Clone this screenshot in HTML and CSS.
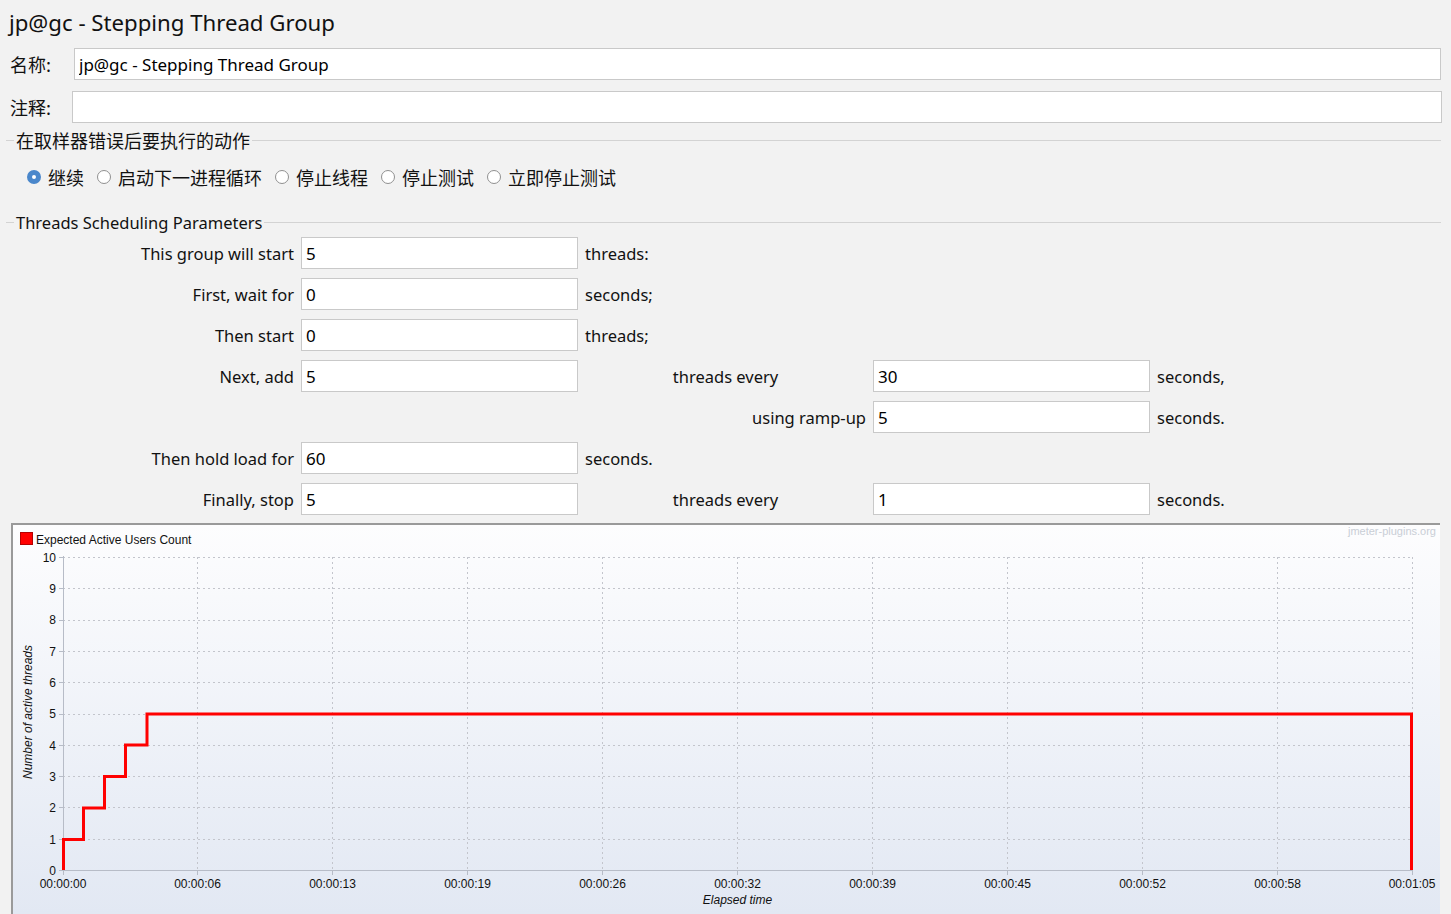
FILE: index.html
```html
<!DOCTYPE html>
<html>
<head>
<meta charset="utf-8">
<title>jp@gc - Stepping Thread Group</title>
<link rel="stylesheet" href="styles.css">
</head>
<body>
<div class="title">jp@gc - Stepping Thread Group</div>

<div class="field-row name-row">
  <span class="zh field-label name-label">名称:</span>
  <input class="text-input" type="text" value="jp@gc - Stepping Thread Group">
</div>
<div class="field-row comment-row">
  <span class="zh field-label comment-label">注释:</span>
  <input class="text-input" type="text" value="">
</div>

<div class="legend legend-first"><span class="zh">在取样器错误后要执行的动作</span></div>
<div class="radio-row zh">
  <span class="radio checked"></span><span class="radio-label">继续</span>
  <span class="radio"></span><span class="radio-label">启动下一进程循环</span>
  <span class="radio"></span><span class="radio-label">停止线程</span>
  <span class="radio"></span><span class="radio-label">停止测试</span>
  <span class="radio"></span><span class="radio-label">立即停止测试</span>
</div>

<div class="legend legend-second"><span>Threads Scheduling Parameters</span></div>

<div class="params">
  <span class="p-label">This group will start</span><input class="text-input" type="text" value="5"><span class="p-text">threads:</span><span></span><span></span>
  <span class="p-label">First, wait for</span><input class="text-input" type="text" value="0"><span class="p-text">seconds;</span><span></span><span></span>
  <span class="p-label">Then start</span><input class="text-input" type="text" value="0"><span class="p-text">threads;</span><span></span><span></span>
  <span class="p-label">Next, add</span><input class="text-input" type="text" value="5"><span class="p-text p-center">threads every</span><input class="text-input" type="text" value="30"><span class="p-text">seconds,</span>
  <span></span><span></span><span class="p-text p-right">using ramp-up</span><input class="text-input" type="text" value="5"><span class="p-text">seconds.</span>
  <span class="p-label">Then hold load for</span><input class="text-input" type="text" value="60"><span class="p-text">seconds.</span><span></span><span></span>
  <span class="p-label">Finally, stop</span><input class="text-input" type="text" value="5"><span class="p-text p-center">threads every</span><input class="text-input" type="text" value="1"><span class="p-text">seconds.</span>
</div>

<div class="chart">
<svg class="chart-svg" width="1427" height="389" viewBox="13 525 1427 389" xmlns="http://www.w3.org/2000/svg">
  <defs>
    <linearGradient id="bg" x1="0" y1="525" x2="0" y2="914" gradientUnits="userSpaceOnUse">
      <stop offset="0" stop-color="#fdfdfe"/>
      <stop offset="1" stop-color="#e2e8f3"/>
    </linearGradient>
  </defs>
  <rect x="13" y="525" width="1427" height="389" fill="url(#bg)"/>
  <text x="1436" y="534.5" class="watermark" text-anchor="end">jmeter-plugins.org</text>
  <rect x="20.5" y="532.5" width="12" height="12" fill="#ff0000" stroke="#b40000" stroke-width="1"/>
  <text x="36" y="543.5" class="legend-text">Expected Active Users Count</text>

  <g class="grid" stroke="#c3c5cc" stroke-width="1" stroke-dasharray="2 3" fill="none" shape-rendering="crispEdges">
    <path d="M63 557.5H1412M63 588.5H1412M63 620.5H1412M63 651.5H1412M63 682.5H1412M63 714.5H1412M63 745.5H1412M63 776.5H1412M63 807.5H1412M63 839.5H1412"/>
    <path d="M197.5 557V870M332.5 557V870M467.5 557V870M602.5 557V870M737.5 557V870M872.5 557V870M1007.5 557V870M1142.5 557V870M1277.5 557V870M1412.5 557V870"/>
  </g>
  <g stroke="#b7bcc7" stroke-width="1.5" fill="none" shape-rendering="crispEdges">
    <path d="M63.5 556V871M63 870.5H1413"/>
    <path d="M59 557.5H63M59 588.5H63M59 620.5H63M59 651.5H63M59 682.5H63M59 714.5H63M59 745.5H63M59 776.5H63M59 807.5H63M59 839.5H63M59 870.5H63"/>
    <path d="M63.5 870V875M197.5 870V875M332.5 870V875M467.5 870V875M602.5 870V875M737.5 870V875M872.5 870V875M1007.5 870V875M1142.5 870V875M1277.5 870V875M1412.5 870V875"/>
  </g>

  <g class="ticks" text-anchor="end">
    <text x="56" y="562">10</text>
    <text x="56" y="593">9</text>
    <text x="56" y="624">8</text>
    <text x="56" y="656">7</text>
    <text x="56" y="687">6</text>
    <text x="56" y="718">5</text>
    <text x="56" y="750">4</text>
    <text x="56" y="781">3</text>
    <text x="56" y="812">2</text>
    <text x="56" y="844">1</text>
    <text x="56" y="875">0</text>
  </g>
  <g class="ticks" text-anchor="middle">
    <text x="63" y="887.5">00:00:00</text>
    <text x="197.5" y="887.5">00:00:06</text>
    <text x="332.5" y="887.5">00:00:13</text>
    <text x="467.5" y="887.5">00:00:19</text>
    <text x="602.5" y="887.5">00:00:26</text>
    <text x="737.5" y="887.5">00:00:32</text>
    <text x="872.5" y="887.5">00:00:39</text>
    <text x="1007.5" y="887.5">00:00:45</text>
    <text x="1142.5" y="887.5">00:00:52</text>
    <text x="1277.5" y="887.5">00:00:58</text>
    <text x="1412" y="887.5">00:01:05</text>
  </g>
  <text class="axis-title" x="737.5" y="903.5" text-anchor="middle">Elapsed time</text>
  <text class="axis-title" transform="translate(31.5 712) rotate(-90)" text-anchor="middle">Number of active threads</text>

  <path d="M63.5 870V839.5H83.5V808H104.5V776.5H125.5V745H147V714H1411.5V870" fill="none" stroke="#ff0000" stroke-width="3"/>
</svg>
</div>
</body>
</html>
```

FILE: styles.css
```css
html, body {
  margin: 0;
  padding: 0;
  overflow: hidden;
  height: 914px;
}
body {
  background: #f2f2f2;
  color: #111;
  font-family: "Noto Sans", "Noto Sans CJK SC", sans-serif;
  font-size: 16.5px;
}
.zh {
  font-family: "Noto Sans CJK SC", "Noto Sans", sans-serif;
  font-size: 18px;
}
.title {
  height: 48px;
  line-height: 46px;
  padding-left: 9px;
  font-size: 22.2px;
  box-sizing: border-box;
}
.field-row {
  display: flex;
  align-items: center;
  height: 32px;
  padding-left: 10px;
}
.name-row { padding-right: 10px; }
.comment-row { margin-top: 11px; padding-right: 9px; }
.field-label { flex: none; }
.name-label { width: 64px; }
.comment-label { width: 62px; }
.field-row .text-input { flex: 1; }

.text-input {
  box-sizing: border-box;
  height: 32px;
  margin: 0;
  padding: 0 4px;
  border: 1px solid #c9c9c9;
  background: #fff;
  font-family: "Noto Sans", "Noto Sans CJK SC", sans-serif;
  font-size: 17px;
  color: #000;
  outline: none;
  border-radius: 0;
  min-width: 0;
}

.legend {
  display: flex;
  align-items: center;
  height: 24px;
  padding-left: 6px;
  padding-right: 10px;
}
.legend::before {
  content: "";
  width: 8px;
  margin-right: 2px;
  border-top: 1px solid #d3d3d3;
}
.legend::after {
  content: "";
  flex: 1;
  margin-left: 2px;
  border-top: 1px solid #d3d3d3;
}
.legend-first { margin-top: 5px; }
.legend-second { margin-top: 21px; }

.radio-row {
  display: flex;
  align-items: center;
  height: 24px;
  margin-top: 13px;
  padding-left: 27px;
}
.radio {
  flex: none;
  box-sizing: border-box;
  width: 14px;
  height: 14px;
  border-radius: 50%;
  border: 1px solid #909090;
  background: #fff;
  margin-right: 7px;
}
.radio.checked {
  border: 5px solid #4a87cb;
  background: #fff;
}
.radio-label {
  margin-right: 13px;
}

.params {
  display: grid;
  grid-template-columns: 294px 277px 281px 277px auto;
  grid-auto-rows: 32px;
  column-gap: 7px;
  row-gap: 9px;
  margin-top: 3px;
  align-items: center;
}
.p-label { text-align: right; }
.p-text { text-align: left; }
.p-center { text-align: center; }
.p-right { text-align: right; }
.params .text-input { width: 100%; }

.chart {
  margin: 8px 11px 0 11px;
  border-top: 2px solid #9a9a9a;
  border-left: 2px solid #9a9a9a;
  height: 389px;
  overflow: hidden;
}
.chart-svg { display: block; }
.chart-svg text {
  font-family: "Liberation Sans", Arial, sans-serif;
  fill: #111;
}
.chart-svg .ticks text { font-size: 12px; }
.chart-svg .legend-text { font-size: 12px; }
.chart-svg .axis-title { font-size: 12px; font-style: italic; }
.chart-svg .watermark { font-size: 11px; fill: #c9ced6; }
```
